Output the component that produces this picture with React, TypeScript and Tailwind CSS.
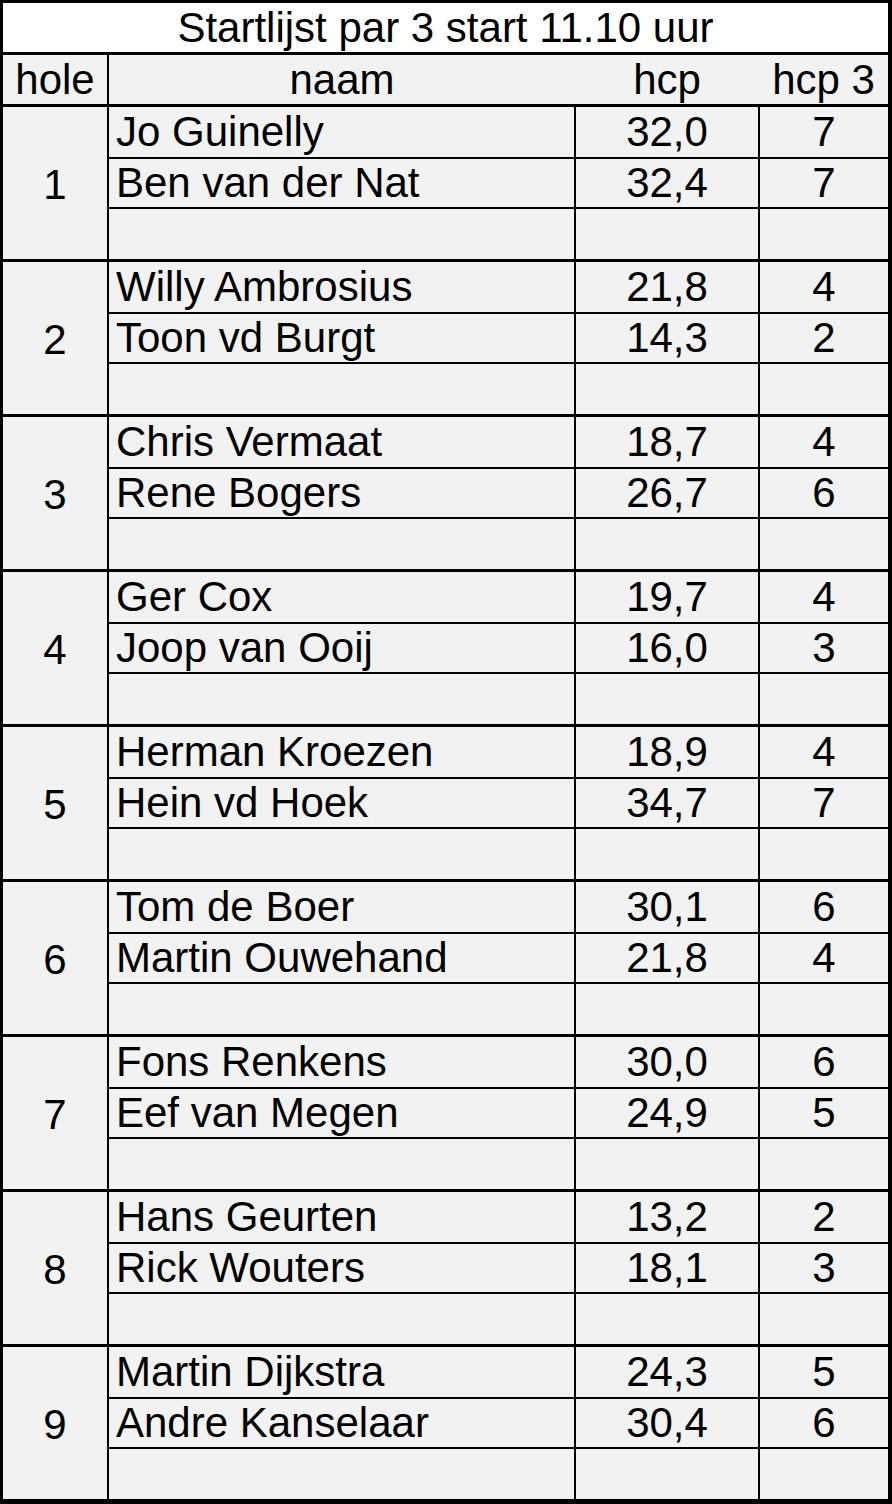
import React from "react";

type P = { name: string; hcp: string; h3: string };
const groups: { hole: number; players: P[] }[] = [
  { hole: 1, players: [{ name: "Jo Guinelly", hcp: "32,0", h3: "7" }, { name: "Ben van der Nat", hcp: "32,4", h3: "7" }] },
  { hole: 2, players: [{ name: "Willy Ambrosius", hcp: "21,8", h3: "4" }, { name: "Toon vd Burgt", hcp: "14,3", h3: "2" }] },
  { hole: 3, players: [{ name: "Chris Vermaat", hcp: "18,7", h3: "4" }, { name: "Rene Bogers", hcp: "26,7", h3: "6" }] },
  { hole: 4, players: [{ name: "Ger Cox", hcp: "19,7", h3: "4" }, { name: "Joop van Ooij", hcp: "16,0", h3: "3" }] },
  { hole: 5, players: [{ name: "Herman Kroezen", hcp: "18,9", h3: "4" }, { name: "Hein vd Hoek", hcp: "34,7", h3: "7" }] },
  { hole: 6, players: [{ name: "Tom de Boer", hcp: "30,1", h3: "6" }, { name: "Martin Ouwehand", hcp: "21,8", h3: "4" }] },
  { hole: 7, players: [{ name: "Fons Renkens", hcp: "30,0", h3: "6" }, { name: "Eef van Megen", hcp: "24,9", h3: "5" }] },
  { hole: 8, players: [{ name: "Hans Geurten", hcp: "13,2", h3: "2" }, { name: "Rick Wouters", hcp: "18,1", h3: "3" }] },
  { hole: 9, players: [{ name: "Martin Dijkstra", hcp: "24,3", h3: "5" }, { name: "Andre Kanselaar", hcp: "30,4", h3: "6" }] },
];

function Row({ p, h }: { p?: P; h: string }) {
  return (
    <div className={`flex gap-[2px] ${h}`}>
      <div className="w-[465px] bg-[#f2f2f2] pl-[7px] whitespace-nowrap">{p?.name ?? ""}</div>
      <div className="w-[182px] bg-[#f2f2f2] text-center">{p?.hcp ?? ""}</div>
      <div className="flex-1 bg-[#f2f2f2] text-center">{p?.h3 ?? ""}</div>
    </div>
  );
}

export default function App() {
  return (
    <div
      className="w-[892px] h-[1504px] bg-black pt-[3px] pl-[3px] pr-[4px] pb-[5px] flex flex-col gap-[3px] text-black text-[42px]"
      style={{ fontFamily: '"Liberation Sans", Arial, sans-serif' }}
    >
      <div className="h-[49px] leading-[49px] bg-white text-center whitespace-nowrap">
        Startlijst par 3 start 11.10 uur
      </div>
      <div className="h-[49px] leading-[49px] flex gap-[2px]">
        <div className="w-[104px] bg-[#f2f2f2] text-center">hole</div>
        <div className="flex-1 bg-[#f2f2f2] flex">
          <div className="w-[466px] text-center">naam</div>
          <div className="w-[184px] text-center">hcp</div>
          <div className="flex-1 text-center">hcp 3</div>
        </div>
      </div>
      {groups.map((g) => (
        <div key={g.hole} className="h-[152px] flex gap-[2px]">
          <div className="w-[104px] bg-[#f2f2f2] flex items-center justify-center pt-[3px]">{g.hole}</div>
          <div className="flex-1 flex flex-col gap-[2px]">
            <Row p={g.players[0]} h="h-[50px] leading-[50px]" />
            <Row p={g.players[1]} h="h-[48px] leading-[48px]" />
            <Row h="h-[50px] leading-[50px]" />
          </div>
        </div>
      ))}
    </div>
  );
}
